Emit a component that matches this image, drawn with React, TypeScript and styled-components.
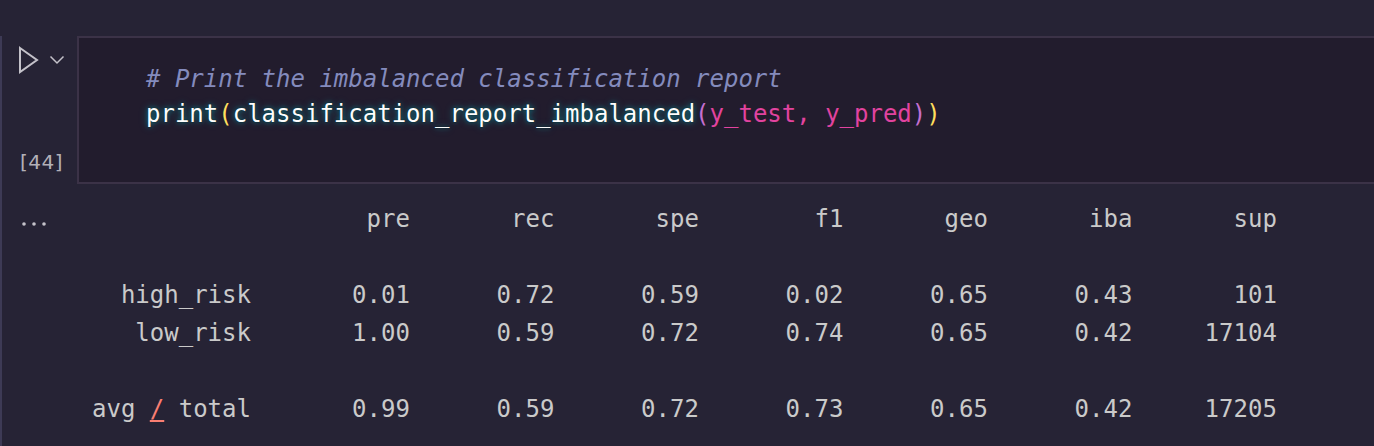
import React from "react";
import styled, { createGlobalStyle } from "styled-components";

const Global = createGlobalStyle`
  html, body { margin: 0; padding: 0; background: #262335; }
  body { width: 1374px; height: 446px; overflow: hidden; }
`;

const Page = styled.div`
  padding-top: 36px;
  font-family: "DejaVu Sans Mono", monospace;
`;

const Cell = styled.div`
  display: flex;
  border-left: 2px solid #3d3a55;
`;

const Gutter = styled.div`
  width: 75px;
  flex: none;
  display: flex;
  flex-direction: column;
  justify-content: space-between;
  padding: 10px 0 10px 0;
  box-sizing: border-box;
`;

const RunRow = styled.div`
  display: flex;
  align-items: flex-start;
  gap: 10px;
  padding-left: 15px;
`;

const ExecCount = styled.div`
  font-family: "DejaVu Sans", sans-serif;
  font-size: 20px;
  line-height: 24px;
  letter-spacing: 0.5px;
  color: #b2b0b8;
  padding-left: 18px;
`;

const Editor = styled.div`
  flex: 1;
  height: 148px;
  box-sizing: border-box;
  background: #221c2d;
  border: 2px solid #3b3247;
  border-right: none;
  padding: 24px 0 0 67px;
  font-size: 24px;
  line-height: 35px;
  white-space: pre;
`;

const Line = styled.div``;

const Comment = styled.span`
  color: #848bbd;
  font-style: italic;
`;

const Glow = styled.span`
  color: #fdfdfd;
  text-shadow: 0 0 2px rgba(0, 23, 22, 0.9), 0 0 4px rgba(3, 237, 249, 0.4),
    0 0 9px rgba(3, 237, 249, 0.35);
`;

const Paren = styled.span<{ $c: string }>`
  color: ${(p) => p.$c};
`;

const Arg = styled.span`
  color: #e2439f;
`;

const Output = styled.div`
  display: flex;
  border-left: 2px solid #3d3a55;
  padding-top: 16px;
  height: 262px;
  box-sizing: border-box;
`;

const OutGutter = styled.div`
  width: 90px;
  flex: none;
  padding: 12px 0 0 19px;
  box-sizing: border-box;
`;

const Pre = styled.pre`
  margin: 0;
  font-family: "DejaVu Sans Mono", monospace;
  font-size: 24px;
  line-height: 38px;
  color: #cacaca;
`;

const Slash = styled.span`
  color: #f97e72;
  text-decoration: underline;
  text-decoration-color: #f97e72;
  text-underline-offset: 3px;
`;

const headers = ["pre", "rec", "spe", "f1", "geo", "iba", "sup"];
const rows: [string, number[], number][] = [
  ["high_risk", [0.01, 0.72, 0.59, 0.02, 0.65, 0.43], 101],
  ["low_risk", [1.0, 0.59, 0.72, 0.74, 0.65, 0.42], 17104],
];
const avg: [number[], number] = [[0.99, 0.59, 0.72, 0.73, 0.65, 0.42], 17205];

const W = 11;
const fmtVals = (v: number[], s: number) =>
  "  " +
  v.map((x) => x.toFixed(2).padStart(9)).join(" ") +
  " " +
  String(s).padStart(9);

const headerLine = "".padStart(W) + "  " + headers.map((h) => h.padStart(9)).join(" ");

export default function App() {
  return (
    <Page>
      <Global />
      <Cell>
        <Gutter>
          <RunRow>
            <svg width="22" height="28" viewBox="0 0 22 28">
              <path d="M3 2 L20 14 L3 26 Z" fill="none" stroke="#c4c2ca" strokeWidth="2" strokeLinejoin="miter" />
            </svg>
            <svg width="16" height="10" viewBox="0 0 16 10" style={{ marginTop: 9 }}>
              <path d="M1.5 1.5 L8 8 L14.5 1.5" fill="none" stroke="#c4c2ca" strokeWidth="1.5" />
            </svg>
          </RunRow>
          <ExecCount>[44]</ExecCount>
        </Gutter>
        <Editor>
          <Line>
            <Comment># Print the imbalanced classification report</Comment>
          </Line>
          <Line>
            <Glow>print</Glow>
            <Paren $c="#fede5d">(</Paren>
            <Glow>classification_report_imbalanced</Glow>
            <Paren $c="#c46fd0">(</Paren>
            <Arg>y_test, y_pred</Arg>
            <Paren $c="#c46fd0">)</Paren>
            <Paren $c="#fede5d">)</Paren>
          </Line>
        </Editor>
      </Cell>
      <Output>
        <OutGutter>
          <svg width="26" height="6" viewBox="0 0 26 6">
            <circle cx="3" cy="3" r="1.8" fill="#c4c2ca" />
            <circle cx="13" cy="3" r="1.8" fill="#c4c2ca" />
            <circle cx="23" cy="3" r="1.8" fill="#c4c2ca" />
          </svg>
        </OutGutter>
        <Pre>
          {headerLine + "\n\n"}
          {rows.map(([n, v, s]) => n.padStart(W) + fmtVals(v, s) + "\n").join("")}
          {"\n"}
          avg <Slash>/</Slash> total{fmtVals(avg[0], avg[1])}
        </Pre>
      </Output>
    </Page>
  );
}
